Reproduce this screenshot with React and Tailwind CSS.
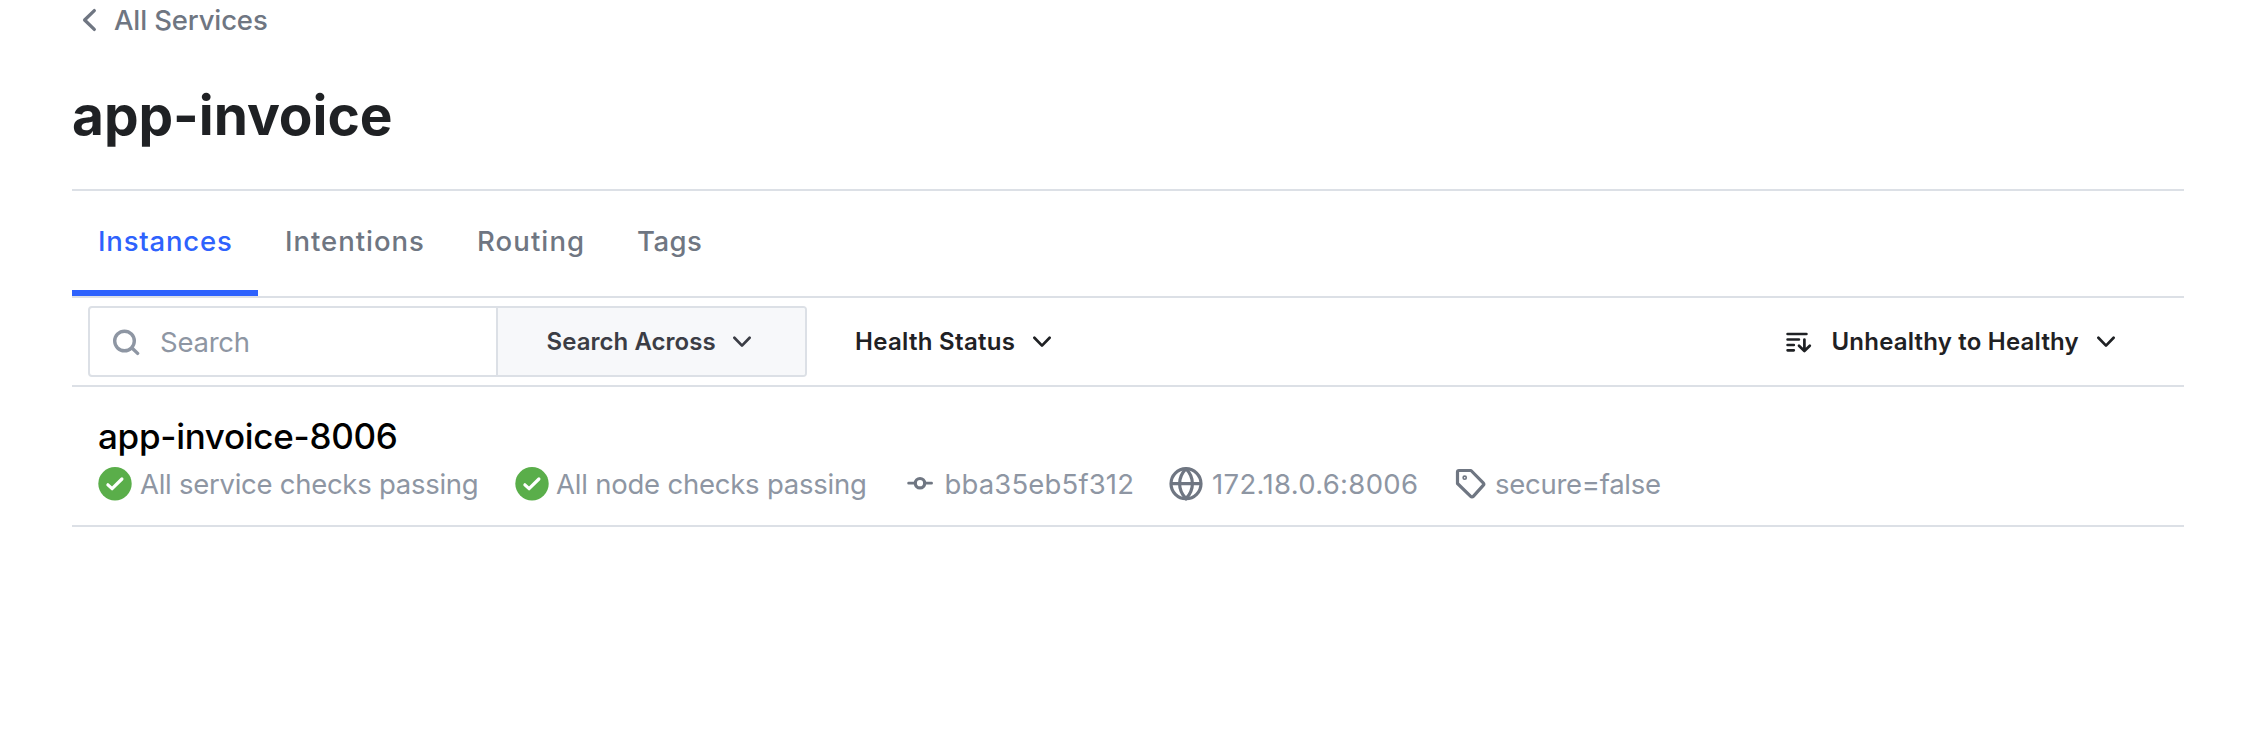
const Check = () => (
  <svg className="h-[34px] w-[34px] shrink-0" viewBox="0 0 34 34" fill="none">
    <circle cx="17" cy="16.7" r="16.7" fill="#5aae4a" />
    <path d="M9.9 17.8l4.2 3.9L23.9 12" stroke="#fff" strokeWidth="3.2" strokeLinecap="round" strokeLinejoin="round" />
  </svg>
);

const ChevronDown = () => (
  <svg className="h-[12px] w-[20px] shrink-0" viewBox="0 0 20 12" fill="none" stroke="currentColor" strokeWidth="2.7" strokeLinecap="round" strokeLinejoin="round">
    <path d="M2.4 1.8L10 9.6l7.6-7.8" />
  </svg>
);

export default function App() {
  return (
    <main className="h-[734px] w-[2248px] overflow-hidden bg-white pr-[64px] pl-[72px] font-['Inter',sans-serif] whitespace-nowrap">
      <nav className="flex h-[40px] items-center text-[27.5px] leading-[40px] text-[#6f7682]">
        <svg className="ml-[10px] h-[24px] w-[16px]" viewBox="0 0 16 24" fill="none" stroke="currentColor" strokeWidth="3.3" strokeLinecap="round" strokeLinejoin="round">
          <path d="M12.3 2.6L2.6 12l9.7 9.4" />
        </svg>
        <a className="ml-[16px] font-[450] tracking-[-0.14px]">All Services</a>
      </nav>

      <header className="flex h-[151px] items-center border-b-2 border-[#dce0e6]">
        <h1 className="text-[55px] leading-[60px] font-bold tracking-[-0.05px] text-[#1f2124]">app-invoice</h1>
      </header>

      <div className="flex h-[107px] border-b-2 border-[#dce0e6] text-[27.5px] leading-[100px] font-medium text-[#6f7682]">
        <a className="h-[105px] w-[186px] border-b-[6px] border-[#2e62fd] pl-[26px] tracking-[0.81px] text-[#2e62fd]">Instances</a>
        <a className="w-[193px] pl-[27px] tracking-[0.97px]">Intentions</a>
        <a className="w-[160px] pl-[26px] tracking-[1.1px]">Routing</a>
        <a className="pl-[26px] tracking-[0.47px]">Tags</a>
      </div>

      <div className="flex h-[89px] items-center border-b-2 border-[#dce0e6] pr-[68.5px] pl-[16px] text-[24px] leading-[40px] font-semibold text-[#1f2124]">
        <div className="flex h-[71px] w-[719px] overflow-hidden rounded-[4px] border-2 border-[#dce0e6]">
          <div className="flex w-[406px] items-center pl-[22px] text-[27.5px] font-normal text-[#8e96a3]">
            <svg className="h-[28px] w-[28px]" viewBox="0 0 28 28" fill="none" stroke="currentColor" strokeWidth="3.4" strokeLinecap="round">
              <circle cx="12.5" cy="13" r="9.8" />
              <path d="M20 20l5.6 5.4" />
            </svg>
            <span className="ml-[20px] tracking-[-0.25px]">Search</span>
          </div>
          <div className="flex flex-1 items-center border-l-2 border-[#dce0e6] bg-[#f7f8fa] pl-[48.5px] text-[#3b3d45]">
            <span className="w-[185.500px] tracking-[0.05px]">Search Across</span>
            <ChevronDown />
          </div>
        </div>
        <div className="ml-[48px] flex items-center">
          <span className="w-[177px] tracking-[0.3px]">Health Status</span>
          <ChevronDown />
        </div>
        <div className="ml-auto flex items-center">
          <svg className="h-[24px] w-[28px]" viewBox="0 0 28 24" fill="none" stroke="currentColor" strokeWidth="2.7" strokeLinecap="round" strokeLinejoin="round">
            <path d="M2.6 4H21.4M2.6 9.5h11.3M2.6 15h6.2M2.6 20.3h6.2M19.4 9.5v11.3M14 15.8l5.4 5.2 5.4-5.2" />
          </svg>
          <span className="ml-[18.5px] w-[264px] tracking-[0.2px]">Unhealthy to Healthy</span>
          <ChevronDown />
        </div>
      </div>

      <article className="h-[140px] border-b-2 border-[#dce0e6] pt-[29px] pl-[26px]">
        <h2 className="h-[40px] text-[35px] leading-[40px] font-medium tracking-[-0.3px] text-black">app-invoice-8006</h2>
        <ul className="flex h-[55px] items-center text-[27.5px] leading-[40px] text-[#8e96a3]">
          <li className="flex w-[416.5px] items-center">
            <Check />
            <span className="ml-[8px] tracking-[-0.27px]">All service checks passing</span>
          </li>
          <li className="flex w-[389.5px] items-center">
            <Check />
            <span className="ml-[7.5px] tracking-[-0.22px]">All node checks passing</span>
          </li>
          <li className="flex w-[265px] items-center">
            <svg className="h-[34px] w-[32px] text-[#6f7682]" viewBox="0 0 32 34" fill="none" stroke="currentColor" strokeWidth="3.2" strokeLinecap="round">
              <circle cx="16" cy="16.2" r="4.7" />
              <path d="M4.6 16.2h6.4M21 16.2h6.6" strokeWidth="2.7" />
            </svg>
            <span className="ml-[8.5px] tracking-[0.15px]">bba35eb5f312</span>
          </li>
          <li className="flex w-[285px] items-center">
            <svg className="h-[34px] w-[34px] text-[#6f7682]" viewBox="0 0 34 34" fill="none" stroke="currentColor" strokeWidth="3.2">
              <circle cx="17" cy="16.7" r="15" />
              <path d="M2 16.7h30M17 1.7c-4.2 4.4-6.4 9.6-6.4 15s2.2 10.6 6.4 15c4.2-4.4 6.4-9.6 6.4-15S21.2 6.1 17 1.7z" />
            </svg>
            <span className="ml-[9px] tracking-[0.33px]">172.18.0.6:8006</span>
          </li>
          <li className="flex items-center">
            <svg className="h-[32px] w-[32px] text-[#6f7682]" viewBox="0 0 32 32" fill="none" stroke="currentColor" strokeWidth="3.2" strokeLinecap="round" strokeLinejoin="round">
              <path d="M3.5 4a1.5 1.5 0 0 1 1.5-1.5h12L29.2 14.9a1.8 1.8 0 0 1 0 2.5L19.3 28.3a1.8 1.8 0 0 1-2.6 0L3.5 15.5z" />
              <circle cx="10.7" cy="9.7" r="0.8" />
            </svg>
            <span className="ml-[9px] tracking-[-0.28px]">secure=false</span>
          </li>
        </ul>
      </article>
    </main>
  );
}
